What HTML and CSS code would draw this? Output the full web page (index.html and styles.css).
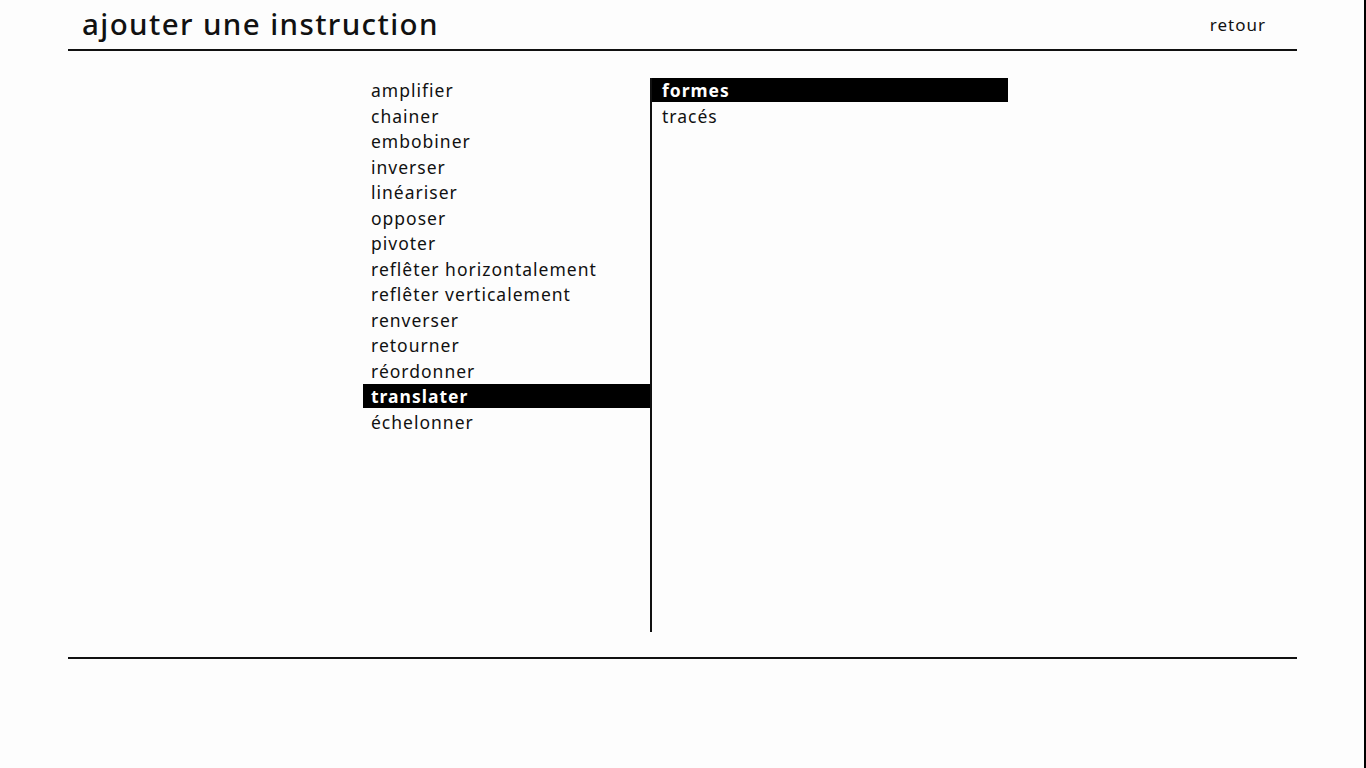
FILE: index.html
```html
<!DOCTYPE html>
<html lang="fr">
<head>
    <meta charset="UTF-8">
    <meta name="viewport" content="width=device-width, initial-scale=1.0">
    <title>ajouter une instruction</title>
    <link rel="stylesheet" href="styles.css">
</head>
<body>
    <div class="page">
        <header class="top">
            <h1>ajouter une instruction</h1>
            <a class="back" href="javascript:void(0)">retour</a>
        </header>
        <main class="picker">
            <ul class="col col-left">
                <li>amplifier</li>
                <li>chainer</li>
                <li>embobiner</li>
                <li>inverser</li>
                <li>linéariser</li>
                <li>opposer</li>
                <li>pivoter</li>
                <li>reflêter horizontalement</li>
                <li>reflêter verticalement</li>
                <li>renverser</li>
                <li>retourner</li>
                <li>réordonner</li>
                <li class="selected">translater</li>
                <li>échelonner</li>
            </ul>
            <ul class="col col-right">
                <li class="selected">formes</li>
                <li>tracés</li>
            </ul>
        </main>
        <footer class="bottom"></footer>
    </div>
</body>
</html>
```

FILE: styles.css
```css
* { box-sizing: border-box; }
html, body { margin: 0; padding: 0; background: #fdfdfd; color: #111; font-family: 'Noto Sans', sans-serif; }
.page { min-height: 100vh; border-right: 2px solid #000; padding: 0 67px 0 68px; }
.top { display: flex; align-items: flex-end; justify-content: space-between; height: 51px; border-bottom: 2px solid #111; padding: 0 31px 0 14px; }
.top h1 { margin: 0 0 5px 0; font-size: 29.5px; font-weight: 500; letter-spacing: 1.4px; line-height: 40px; }
.back { margin-bottom: 13px; font-size: 17px; letter-spacing: 1px; color: #111; text-decoration: none; }
.picker { display: flex; padding: 27px 0 0 295px; height: 606px; }
.col { list-style: none; margin: 0; padding: 0; height: 554px; }
.col li { height: 25.5px; line-height: 24px; padding-left: 8px; font-size: 17.5px; letter-spacing: 1px; white-space: nowrap; }
.col li.selected { background: linear-gradient(#000, #000) 0 0 / 100% 24px no-repeat; color: #fff; font-weight: 700; }
.col-left { width: 287px; }
.col-right { width: 358px; border-left: 2px solid #111; }
.col-right li { padding-left: 10px; }
.bottom { height: 26px; border-top: 2px solid #111; }
```
